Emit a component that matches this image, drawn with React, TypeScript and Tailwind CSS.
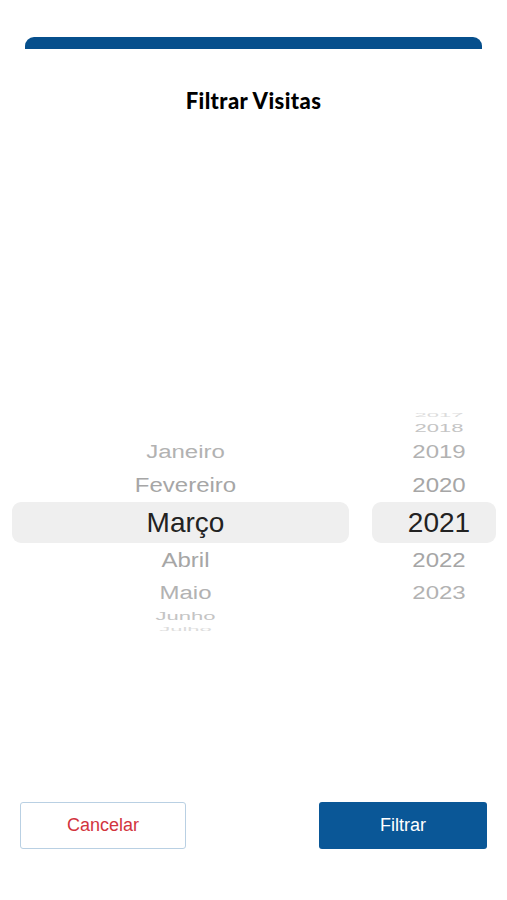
const rows = [
  { h: "h-[10px]", month: "", year: "2017", text: "text-[22px] scale-y-[0.22] text-[#dcdcdc]", sel: false },
  { h: "h-[16px]", month: "", year: "2018", text: "text-[22px] scale-y-[0.5] text-[#c4c4c4]", sel: false },
  { h: "h-[31px]", month: "Janeiro", year: "2019", text: "text-[24px] scale-y-[0.75] text-[#b2b2b2]", sel: false },
  { h: "h-[35px]", month: "Fevereiro", year: "2020", text: "text-[24px] scale-y-[0.88] text-[#a6a6a6]", sel: false },
  { h: "h-[41px]", month: "Março", year: "2021", text: "text-[28px] text-[#222222]", sel: true },
  { h: "h-[34px]", month: "Abril", year: "2022", text: "text-[24px] scale-y-[0.88] text-[#a6a6a6]", sel: false },
  { h: "h-[31px]", month: "Maio", year: "2023", text: "text-[24px] scale-y-[0.75] text-[#b2b2b2]", sel: false },
  { h: "h-[16px]", month: "Junho", year: "", text: "text-[22px] scale-y-[0.5] text-[#c4c4c4]", sel: false },
  { h: "h-[10px]", month: "Julho", year: "", text: "text-[22px] scale-y-[0.22] text-[#dcdcdc]", sel: false },
];

function Column({ field, width }: { field: "month" | "year"; width: string }) {
  return (
    <div className={`flex flex-col ${width}`}>
      {rows.map((r, i) => (
        <div
          key={i}
          className={`${r.h} flex items-center justify-center overflow-hidden pl-[10px] ${r.sel ? "rounded-[9px] bg-[#efefef]" : ""}`}
        >
          <span className={`leading-none whitespace-nowrap ${r.text}`}>{r[field]}</span>
        </div>
      ))}
    </div>
  );
}

export default function App() {
  return (
    <div className="flex h-[900px] w-[507px] flex-col bg-white pt-[37px] font-['Liberation_Sans',Arial,sans-serif]">
      <div className="mx-[25px] h-[12px] rounded-t-[9px] bg-[#064f8c]" />

      <h1 className="mt-[38px] text-center font-['Lato',sans-serif] text-[22px] font-black leading-[28px] tracking-[0.4px] text-black">
        Filtrar Visitas
      </h1>

      <div className="mt-[295px] flex gap-[23px] pl-[12px] pr-[11px]">
        <Column field="month" width="w-[337px]" />
        <Column field="year" width="w-[124px]" />
      </div>

      <div className="mt-[168px] flex justify-between px-[20px]">
        <button className="h-[47px] w-[166px] rounded-[3px] border border-[#b9d0e3] bg-white text-[18px] text-[#d2343d]">
          Cancelar
        </button>
        <button className="h-[47px] w-[168px] rounded-[3px] bg-[#0a5797] text-[18px] text-white">
          Filtrar
        </button>
      </div>
    </div>
  );
}
